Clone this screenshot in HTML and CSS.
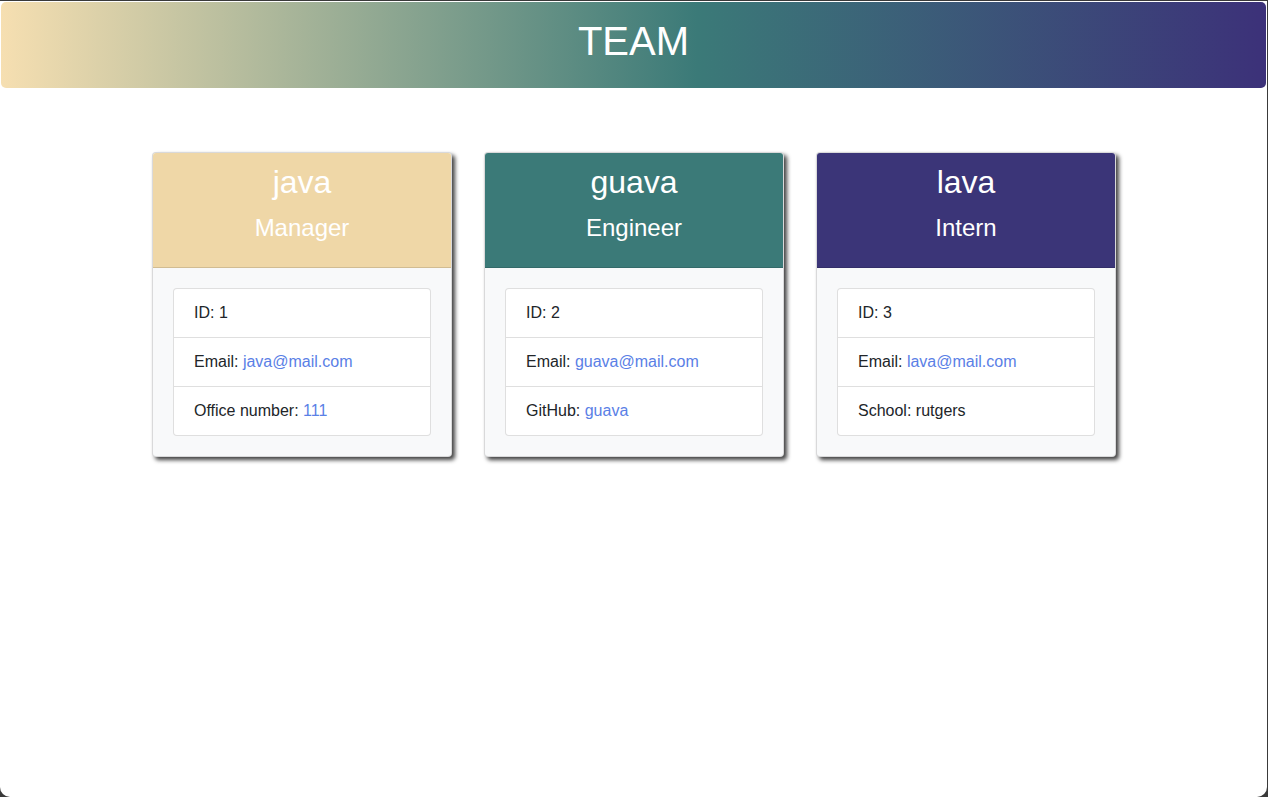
FILE: index.html
```html
<!DOCTYPE html>
<html lang="en">
<head>
<meta charset="utf-8">
<title>Team</title>
<link rel="stylesheet" href="styles.css">
</head>
<body>
<div class="window">
  <header class="banner">
    <h1 class="banner-title">TEAM</h1>
  </header>
  <main class="cards">
    <section class="card">
      <div class="card-header manager">
        <h2 class="card-name">java</h2>
        <h4 class="card-role">Manager</h4>
      </div>
      <div class="card-body">
        <ul class="list">
          <li class="list-item">ID: 1</li>
          <li class="list-item">Email: <a class="link" href="#">java@mail.com</a></li>
          <li class="list-item">Office number: <a class="link" href="#">111</a></li>
        </ul>
      </div>
    </section>
    <section class="card">
      <div class="card-header engineer">
        <h2 class="card-name">guava</h2>
        <h4 class="card-role">Engineer</h4>
      </div>
      <div class="card-body">
        <ul class="list">
          <li class="list-item">ID: 2</li>
          <li class="list-item">Email: <a class="link" href="#">guava@mail.com</a></li>
          <li class="list-item">GitHub: <a class="link" href="#">guava</a></li>
        </ul>
      </div>
    </section>
    <section class="card">
      <div class="card-header intern">
        <h2 class="card-name">lava</h2>
        <h4 class="card-role">Intern</h4>
      </div>
      <div class="card-body">
        <ul class="list">
          <li class="list-item">ID: 3</li>
          <li class="list-item">Email: <a class="link" href="#">lava@mail.com</a></li>
          <li class="list-item">School: rutgers</li>
        </ul>
      </div>
    </section>
  </main>
</div>
</body>
</html>
```

FILE: styles.css
```css
* { box-sizing: border-box; }
html, body {
  margin: 0;
  padding: 0;
  background: #3a3a3a;
  width: 1268px;
  height: 797px;
  overflow: hidden;
}
body {
  font-family: "Liberation Sans", Arial, Helvetica, sans-serif;
  color: #212529;
  font-size: 16px;
  line-height: 1.5;
}
.window {
  margin-top: 1px;
  width: 1267px;
  height: 796px;
  background: #ffffff;
  border-radius: 0 0 10px 10px;
  padding-top: 1px;
}
.banner {
  height: 86px;
  margin: 0 1px;
  border-radius: 5px;
  background: linear-gradient(to right, #f6dfb1 0%, #3b7a78 55%, #3c3179 100%);
  padding-top: 15px;
  text-align: center;
}
.banner-title {
  margin: 0;
  font-size: 40px;
  font-weight: 400;
  line-height: 48px;
  color: #ffffff;
}
.cards {
  display: flex;
  justify-content: center;
  gap: 32px;
  padding: 64px 0 0 1px;
}
.card {
  width: 300px;
  border: 1px solid rgba(0,0,0,0.125);
  border-radius: 4px;
  background: #f8f9fa;
  box-shadow: 3px 3px 4px rgba(0,0,0,0.75);
  overflow: hidden;
}
.card-header {
  padding: 10px 20px 25px;
  text-align: center;
  color: #ffffff;
  border-bottom: 1px solid rgba(0,0,0,0.125);
}
.manager { background: #efd7a7; }
.engineer { background: #3b7a78; }
.intern { background: #3b3578; }
.card-name {
  margin: 0 0 12px;
  font-size: 32px;
  font-weight: 400;
  line-height: 38px;
}
.card-role {
  margin: 0;
  font-size: 24px;
  font-weight: 400;
  line-height: 29px;
}
.card-body {
  padding: 20px;
}
.list {
  list-style: none;
  margin: 0;
  padding: 0;
  background: #ffffff;
  border: 1px solid rgba(0,0,0,0.125);
  border-radius: 4px;
}
.list-item {
  padding: 12px 20px;
  line-height: 24px;
  border-top: 1px solid rgba(0,0,0,0.125);
}
.list-item:first-child { border-top: none; }
.link {
  color: #5a80e6;
  text-decoration: none;
}
```
